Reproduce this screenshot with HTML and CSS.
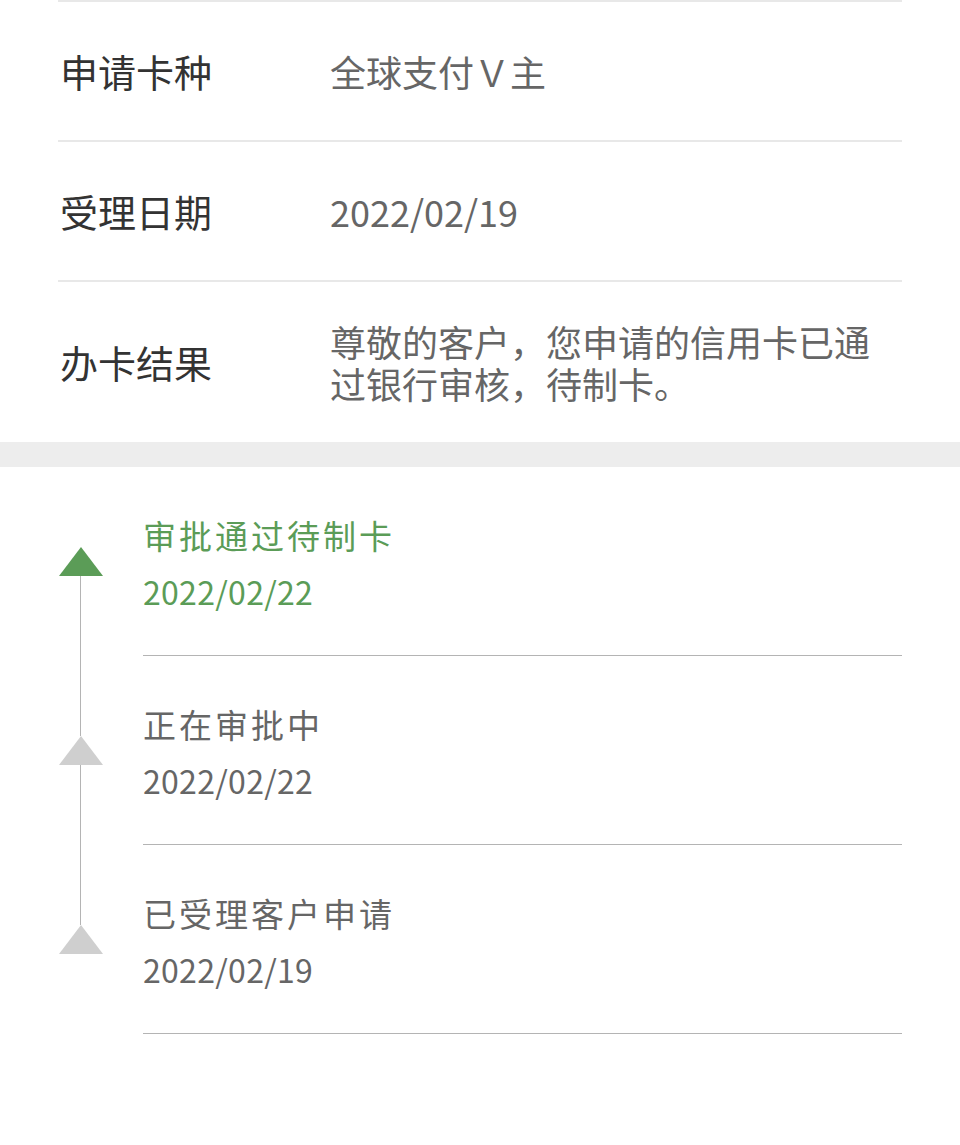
FILE: index.html
```html
<!DOCTYPE html>
<html lang="zh-CN">
<head>
  <meta charset="UTF-8" />
  <meta name="viewport" content="width=device-width, initial-scale=1.0" />
  <title>办卡进度</title>
  <link rel="stylesheet" href="styles.css">
</head>
<body>
  <div class="info">
    <div class="info-row">
      <div class="info-label">申请卡种</div>
      <div class="info-value">全球支付Ｖ主</div>
    </div>
    <div class="info-row">
      <div class="info-label">受理日期</div>
      <div class="info-value">2022/02/19</div>
    </div>
    <div class="info-row">
      <div class="info-label">办卡结果</div>
      <div class="info-value">尊敬的客户，您申请的信用卡已通过银行审核，待制卡。</div>
    </div>
  </div>

  <div class="band"></div>

  <div class="timeline">
    <div class="tl-item current first">
      <div class="tl-mark">
        <span class="tl-tri"></span>
        <span class="tl-line grow"></span>
      </div>
      <div class="tl-body">
        <div class="tl-title">审批通过待制卡</div>
        <div class="tl-date">2022/02/22</div>
      </div>
    </div>
    <div class="tl-item">
      <div class="tl-mark">
        <span class="tl-line top"></span>
        <span class="tl-tri"></span>
        <span class="tl-line grow"></span>
      </div>
      <div class="tl-body">
        <div class="tl-title">正在审批中</div>
        <div class="tl-date">2022/02/22</div>
      </div>
    </div>
    <div class="tl-item">
      <div class="tl-mark">
        <span class="tl-line top"></span>
        <span class="tl-tri"></span>
      </div>
      <div class="tl-body">
        <div class="tl-title">已受理客户申请</div>
        <div class="tl-date">2022/02/19</div>
      </div>
    </div>
  </div>
</body>
</html>
```

FILE: styles.css
```css
body { margin: 0; background: #fff; font-family: "Noto Sans CJK SC", "Noto Sans", sans-serif; }

/* info block */
.info { margin: 0 58px; border-top: 2px solid #e8e8e8; }
.info-row { display: flex; align-items: center; min-height: 140px; padding: 38px 0; box-sizing: border-box; border-bottom: 2px solid #e8e8e8; }
.info-row:last-child { border-bottom: none; min-height: 160px; }
.info-label { width: 270px; flex-shrink: 0; padding-left: 2px; font-size: 38px; color: #333; line-height: 42px; }
.info-value { flex: 1; font-size: 36px; color: #666; line-height: 42px; }

.band { height: 25px; background: #ededed; }

/* timeline */
.timeline { margin: 0 58px 0 58px; }
.tl-item { display: flex; }
.tl-mark { width: 45px; margin-right: 40px; display: flex; flex-direction: column; align-items: center; padding-top: 80px; }
.tl-item + .tl-item .tl-mark { padding-top: 0; }
.tl-line { width: 1px; background: #b4b4b4; }
.tl-line.top { height: 80px; }
.tl-line.grow { flex: 1; }
.tl-tri { width: 0; height: 0; border-left: 22.5px solid transparent; border-right: 22.5px solid transparent; border-bottom: 29px solid #cfcfcf; }
.current .tl-tri { border-bottom-color: #5b9c57; }
.tl-body { flex: 1; padding: 49px 0 45px; border-bottom: 1px solid #b4b4b4; }
.tl-title { font-size: 33px; line-height: 38px; letter-spacing: 3px; color: #666; margin-bottom: 18px; }
.tl-date { font-size: 32px; line-height: 38px; letter-spacing: 0.3px; color: #666; }
.current .tl-title, .current .tl-date { color: #5b9c57; }
```
